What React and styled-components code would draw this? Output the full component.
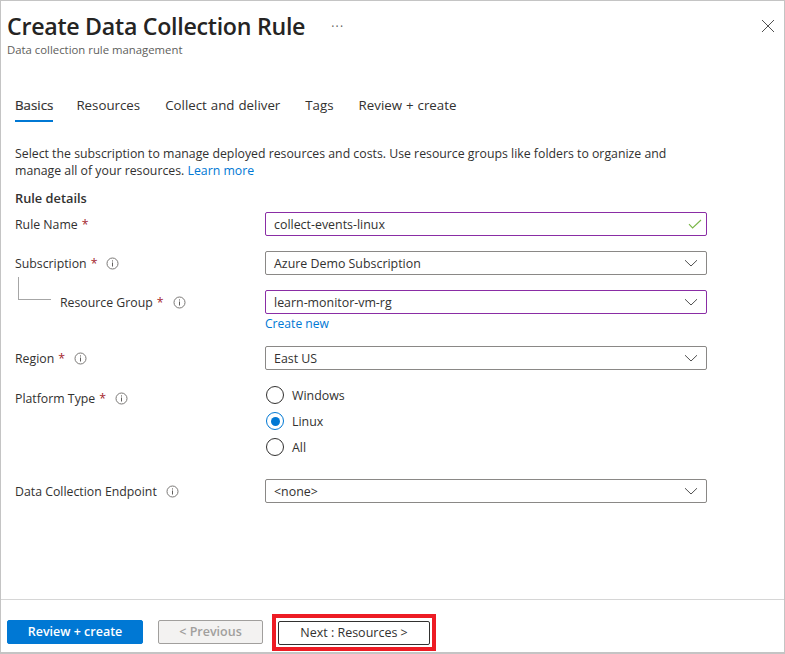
import React from "react";
import styled, { createGlobalStyle } from "styled-components";

const Global = createGlobalStyle`
  html, body { margin: 0; padding: 0; background: #fff; }
  body { font-family: "Open Sans", "Noto Sans", "Liberation Sans", sans-serif; color: #323130; }
  * { box-sizing: border-box; }
`;

const Frame = styled.div`
  width: 785px;
  height: 654px;
  border: 1px solid #c4c4c4;
  border-bottom-width: 2px;
  display: flex;
  flex-direction: column;
  background: #fff;
`;
const Header = styled.header`
  display: flex;
  justify-content: space-between;
  padding: 11px 7px 0 6px;
  height: 63px;
`;
const TitleBlock = styled.div`display: flex; flex-direction: column;`;
const TitleRow = styled.div`display: flex; align-items: center; gap: 26px; height: 29px;`;
const Title = styled.h1`
  margin: 0;
  font-size: 23.2px;
  line-height: 29px;
  font-weight: 600;
  letter-spacing: -0.28px;
  color: #252423;
  white-space: nowrap;
`;
const Dots = styled.span`
  font-size: 12px;
  line-height: 12px;
  letter-spacing: 1.2px;
  color: #605e5c;
`;
const Subtitle = styled.div`
  font-size: 11.35px;
  line-height: 16px;
  margin-top: 1px;
  color: #605e5c;
`;
const Close = styled.button`
  border: 0;
  padding: 0;
  background: none;
  width: 14px;
  height: 14px;
  margin-top: 7px;
  margin-right: 2px;
  display: flex;
`;
const Tabs = styled.nav`
  display: flex;
  gap: 25px;
  padding: 0 14px;
  height: 59px;
  margin-top: 22px;
  font-size: 13.3px;
  word-spacing: 0.5px;
`;
const Tab = styled.div`
  height: 36px;
  padding-top: 9px;
  line-height: 20px;
  color: #323130;
  white-space: nowrap;
  ${(p) => p.$active && `
    border-bottom: 2px solid #0078d4;
    font-weight: 500;
    margin-right: -2px;
    -webkit-text-stroke: 0.2px #323130;
  `}
`;
const Main = styled.main`
  flex: 1;
  padding: 0 14px;
`;
const Intro = styled.p`
  margin: 0;
  width: 680px;
  line-height: 17px;
  font-size: 12.3px;
  color: #323130;
`;
const Link = styled.a`color: #0078d4; text-decoration: none;`;
const Section = styled.h2`
  margin: 11px 0 0;
  font-size: 12.8px;
  line-height: 17px;
  font-weight: 600;
  color: #323130;
`;
const Row = styled.div`
  display: grid;
  grid-template-columns: 250px 442px;
  margin-top: ${(p) => p.$mt}px;
`;
const LabelCell = styled.div`
  display: flex;
  align-items: center;
  height: 24px;
  font-size: 12.3px;
  color: #323130;
  white-space: nowrap;
`;
const Connector = styled.span`
  align-self: flex-start;
  width: 33px;
  height: 23px;
  margin: -13px 9px 0 3px;
  border-left: 1px solid #a6a6a6;
  border-bottom: 1px solid #a6a6a6;
`;
const Req = styled.span`color: #a4262c; margin-left: 4px;`;
const Info = styled.svg`
  width: 13px;
  height: 13px;
  margin-left: 9px;
  flex: none;
`;
const Field = styled.div`
  height: 24px;
  border: 1px solid ${(p) => (p.$edited ? "#8a2da5" : "#8a8886")};
  border-radius: 2px;
  padding: 0 8px;
  display: flex;
  align-items: center;
  justify-content: space-between;
  font-size: 12.4px;
  color: #323130;
`;
const FieldIcon = styled.svg`
  width: 14px;
  height: 10px;
  margin-right: ${(p) => p.$mr}px;
  flex: none;
`;
const CreateNew = styled(Link)`
  display: block;
  font-size: 12.1px;
  line-height: 17px;
  margin-top: 1px;
`;
const Radios = styled.div`display: flex; flex-direction: column; gap: 8px; padding-left: 1px;`;
const Radio = styled.label`
  display: flex;
  align-items: center;
  gap: 8px;
  height: 18px;
  font-size: 12.4px;
  color: #323130;
`;
const Dot = styled.span`
  width: 18px;
  height: 18px;
  border-radius: 50%;
  border: 1px solid ${(p) => (p.$on ? "#0078d4" : "#323130")};
  display: flex;
  align-items: center;
  justify-content: center;
  &::after {
    content: "";
    width: 9px;
    height: 9px;
    border-radius: 50%;
    background: ${(p) => (p.$on ? "#0078d4" : "transparent")};
  }
`;
const Footer = styled.footer`
  height: 53px;
  border-top: 1px solid #d6d6d6;
  padding: 20px 0 0 6px;
  display: flex;
  align-items: flex-start;
`;
const Button = styled.button`
  height: 24px;
  width: ${(p) => p.$w}px;
  margin-right: ${(p) => p.$mr || 0}px;
  padding: 0;
  border-radius: 2px;
  font-family: inherit;
  font-size: 12.5px;
  line-height: 20px;
  border: 1px solid ${(p) => p.$border};
  background: ${(p) => p.$bg};
  color: ${(p) => p.$color};
  font-weight: ${(p) => p.$weight || 400};
`;
const Highlight = styled.div`
  border: 4px solid #ed1c24;
  padding: 2px;
  margin: -6px 0 0 -6px;
`;

const InfoIcon = () => (
  <Info viewBox="0 0 13 13" fill="none">
    <circle cx="6.5" cy="6.5" r="5.5" stroke="#7a7876" strokeWidth="1" />
    <rect x="6" y="5.5" width="1" height="4" fill="#605e5c" />
    <rect x="6" y="3.4" width="1" height="1.1" fill="#605e5c" />
  </Info>
);
const Chevron = () => (
  <FieldIcon $mr={0} viewBox="0 0 14 10" fill="none">
    <path d="M1 2.2 7 8 13 2.2" stroke="#505050" strokeWidth="1" />
  </FieldIcon>
);
const Check = () => (
  <FieldIcon $mr={-4} viewBox="0 0 14 10" fill="none">
    <path d="M1 5.2 4.6 9 13 1" stroke="#7ab648" strokeWidth="1.1" />
  </FieldIcon>
);

export default function App() {
  return (
    <Frame>
      <Global />
      <Header>
        <TitleBlock>
          <TitleRow>
            <Title>Create Data Collection Rule</Title>
            <Dots>···</Dots>
          </TitleRow>
          <Subtitle>Data collection rule management</Subtitle>
        </TitleBlock>
        <Close aria-label="Close">
          <svg width="14" height="14" viewBox="0 0 14 14" fill="none">
            <path d="M1 1 13 13M13 1 1 13" stroke="#505050" strokeWidth="1" />
          </svg>
        </Close>
      </Header>
      <Tabs>
        <Tab $active>Basics</Tab>
        <Tab>Resources</Tab>
        <Tab>Collect and deliver</Tab>
        <Tab>Tags</Tab>
        <Tab>Review + create</Tab>
      </Tabs>
      <Main>
        <Intro>
          Select the subscription to manage deployed resources and costs. Use resource groups like folders to organize and
          manage all of your resources. <Link href="#">Learn more</Link>
        </Intro>
        <Section>Rule details</Section>
        <Row $mt={5}>
          <LabelCell>Rule Name<Req>*</Req></LabelCell>
          <Field $edited>collect-events-linux<Check /></Field>
        </Row>
        <Row $mt={15}>
          <LabelCell>Subscription<Req>*</Req><InfoIcon /></LabelCell>
          <Field>Azure Demo Subscription<Chevron /></Field>
        </Row>
        <Row $mt={15}>
          <LabelCell><Connector />Resource Group<Req>*</Req><InfoIcon /></LabelCell>
          <div>
            <Field $edited>learn-monitor-vm-rg<Chevron /></Field>
            <CreateNew href="#">Create new</CreateNew>
          </div>
        </Row>
        <Row $mt={14}>
          <LabelCell>Region<Req>*</Req><InfoIcon /></LabelCell>
          <Field>East US<Chevron /></Field>
        </Row>
        <Row $mt={16}>
          <LabelCell>Platform Type<Req>*</Req><InfoIcon /></LabelCell>
          <Radios>
            <Radio><Dot />Windows</Radio>
            <Radio><Dot $on />Linux</Radio>
            <Radio><Dot />All</Radio>
          </Radios>
        </Row>
        <Row $mt={23}>
          <LabelCell>Data Collection Endpoint<InfoIcon /></LabelCell>
          <Field>{"<none>"}<Chevron /></Field>
        </Row>
      </Main>
      <Footer>
        <Button $w={136} $mr={15} $bg="#0078d4" $border="#0078d4" $color="#fff" $weight={600}>Review + create</Button>
        <Button $w={105} $mr={15} $bg="#f3f2f1" $border="#a19f9d" $color="#a19f9d" $weight={600}>{"< Previous"}</Button>
        <Highlight>
          <Button $w={152} $bg="#fff" $border="#323130" $color="#323130">{"Next : Resources >"}</Button>
        </Highlight>
      </Footer>
    </Frame>
  );
}
